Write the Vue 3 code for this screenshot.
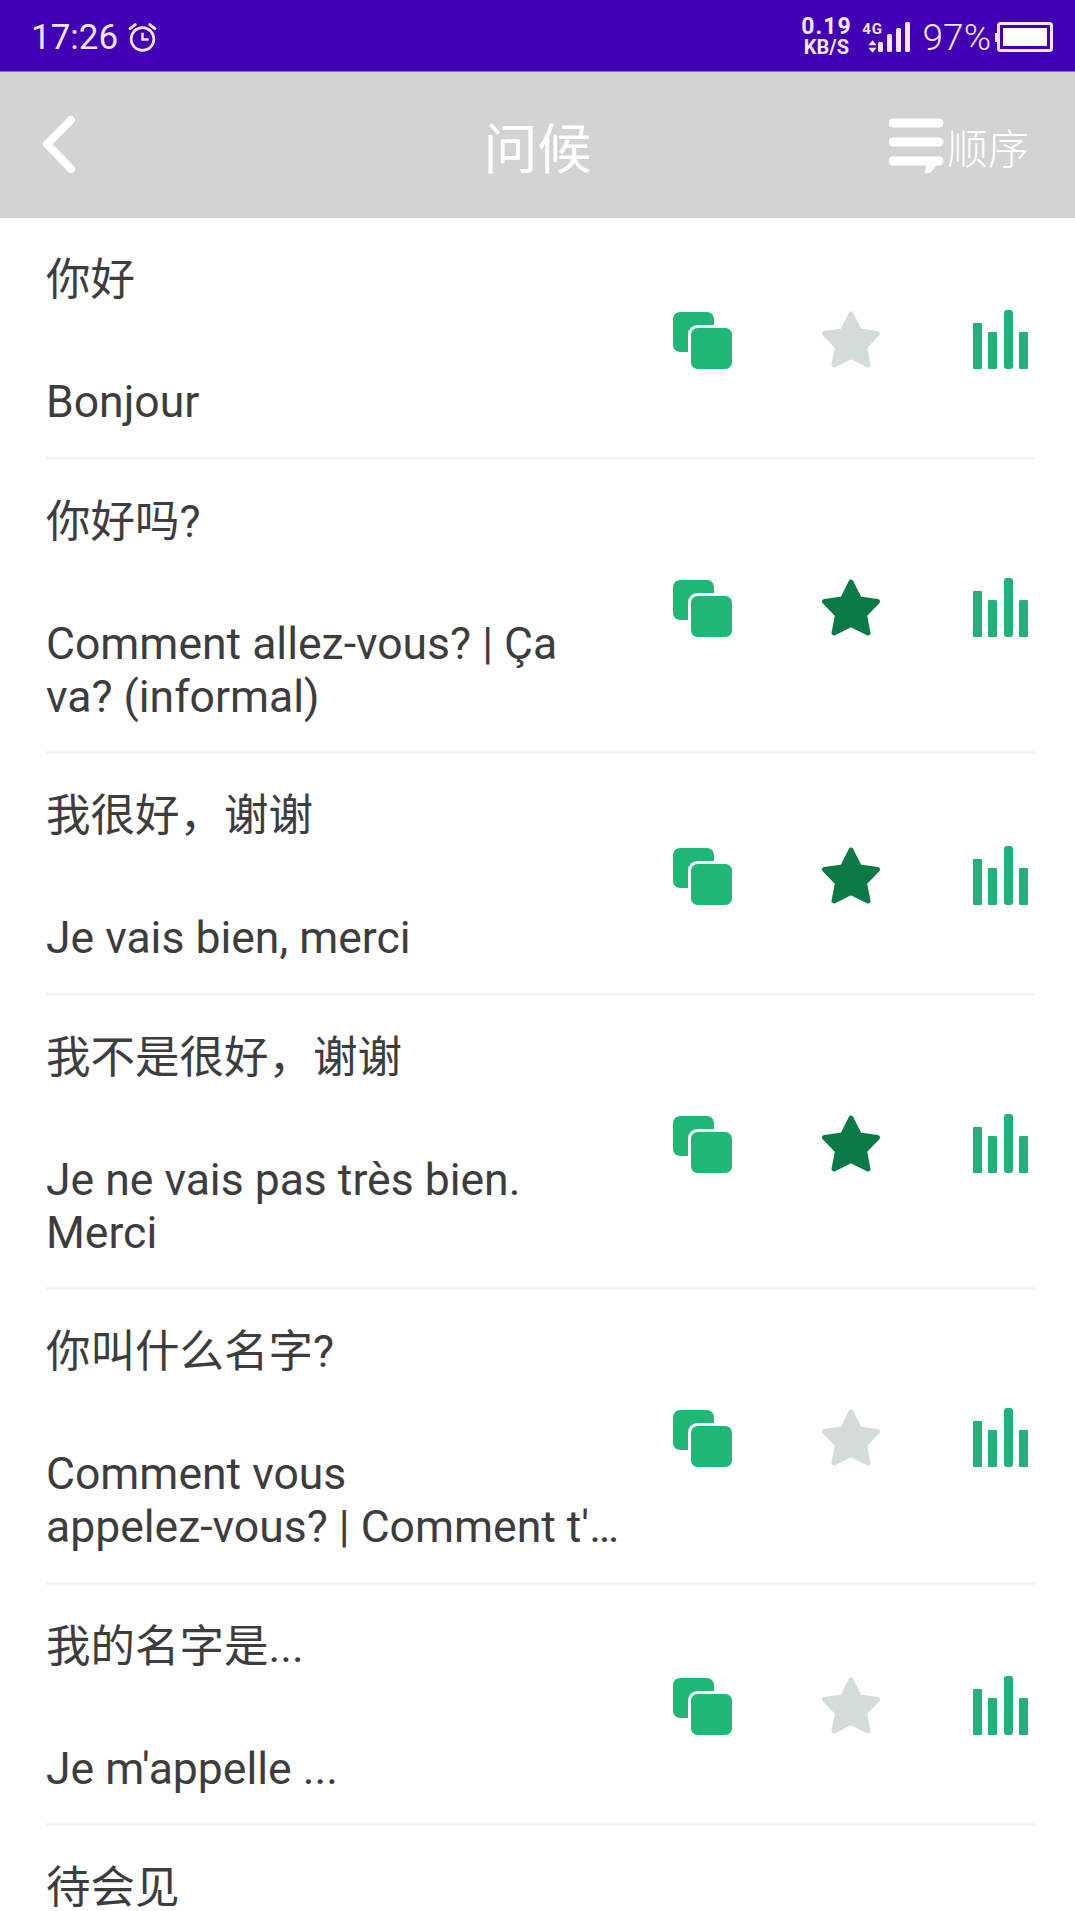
<template>
  <div class="phone">
    <div class="statusBar">
      <span class="clock">17:26</span>
      <svg class="alarm" viewBox="0 0 30 30" width="31" height="31">
        <circle cx="15" cy="16.500" r="11" fill="none" stroke="#f4e6ff" stroke-width="2.600" />
        <path d="M15 10.500v6.500h6" fill="none" stroke="#f4e6ff" stroke-width="2.400" />
        <path d="M3 6.500l5-4M27 6.500l-5-4" fill="none" stroke="#f4e6ff" stroke-width="2.800" stroke-linecap="round" />
      </svg>
      <div class="spacer"></div>
      <div class="speed">
        <span class="speedValue">0.19</span>
        <span class="speedUnit">KB/S</span>
      </div>
      <div class="network">
        <span class="networkLabel">4G</span>
        <svg viewBox="0 0 10 14" width="9" height="13">
          <path d="M5 0l4.500 5.500H.500zM5 14l4.500-5.500H.500z" fill="#f4e6ff" />
        </svg>
      </div>
      <svg class="signal" viewBox="0 0 32 30" width="32" height="30">
        <rect x="0" y="20" width="5" height="10" rx="1.500" fill="#f4e6ff" />
        <rect x="9" y="12" width="5" height="18" rx="1.500" fill="#f4e6ff" />
        <rect x="18" y="6" width="5" height="24" rx="1.500" fill="#f4e6ff" />
        <rect x="27" y="0" width="5" height="30" rx="1.500" fill="#f4e6ff" />
      </svg>
      <span class="battery">97%</span>
      <svg class="batteryIcon" viewBox="0 0 58 30" width="58" height="30">
        <rect x="0" y="11" width="3" height="9" fill="#f4e6ff" />
        <rect x="3.500" y="1.500" width="53" height="27" rx="2" fill="#4200b5" stroke="#f4e6ff" stroke-width="3" />
        <rect x="8" y="6" width="44" height="18" fill="#fff" />
      </svg>
    </div>

    <div class="navBar">
      <svg class="back" viewBox="0 0 34 60" width="34" height="60">
        <path d="M29 5L5 29l24 25" fill="none" stroke="#fff" stroke-width="8" stroke-linecap="round" stroke-linejoin="round" />
      </svg>
      <span class="title">问候</span>
      <div class="order">
        <svg viewBox="0 0 58 58" width="58" height="58">
          <path d="M4 6h46M4 25h46M4 44h46" fill="none" stroke="#fff" stroke-width="9" stroke-linecap="round" />
          <path d="M38 41h16L41 56h-5z" fill="#fff" />
        </svg>
        <span>顺序</span>
      </div>
    </div>

    <div class="list">
      <div v-for="phrase in phrases" :key="phrase.cn" class="row">
        <div class="texts">
          <p class="cn">{{ phrase.cn }}</p>
          <p class="fr">{{ phrase.fr }}</p>
        </div>
        <div class="actions">
          <svg viewBox="0 0 60 60" width="60" height="60">
            <rect x="0" y="2" width="41" height="40" rx="7" fill="#1fb877" />
            <rect x="16.500" y="16.500" width="44" height="44" rx="8" fill="#1fb877" stroke="#fefefe" stroke-width="3" />
          </svg>
          <svg viewBox="0 0 60 60" width="60" height="60">
            <polygon
              points="30,4 38.500,21 56.500,23.500 43.500,37 47,55 30,46.500 13,55 16.500,37 3.500,23.500 21.500,21"
              :fill="phrase.starred ? '#0b7a46' : '#d3dcd9'"
              :stroke="phrase.starred ? '#0b7a46' : '#d3dcd9'"
              stroke-width="5"
              stroke-linejoin="round"
            />
          </svg>
          <svg viewBox="0 0 60 60" width="60" height="60">
            <rect x="4" y="13" width="9" height="46" rx="1" fill="#20b27a" />
            <rect x="19" y="22" width="9" height="37" rx="1" fill="#20b27a" />
            <rect x="35" y="0" width="9" height="59" rx="3" fill="#20b27a" />
            <rect x="50" y="22" width="9" height="37" rx="1" fill="#20b27a" />
          </svg>
        </div>
      </div>
    </div>
  </div>
</template>

<script setup>
const phrases = [
  { cn: '你好', fr: 'Bonjour', starred: false },
  { cn: '你好吗?', fr: 'Comment allez-vous? | Ça va? (informal)', starred: true },
  { cn: '我很好，谢谢', fr: 'Je vais bien, merci', starred: true },
  { cn: '我不是很好，谢谢', fr: 'Je ne vais pas très bien. Merci', starred: true },
  { cn: '你叫什么名字?', fr: "Comment vous\nappelez-vous? | Comment t'…", starred: false },
  { cn: '我的名字是...', fr: "Je m'appelle ...", starred: false },
  { cn: '待会见', fr: '', starred: false }
]
</script>

<style scoped>
.phone {
  width: 1075px;
  height: 1911px;
  overflow: hidden;
  background: #fefefe;
  font-family: Roboto, "Noto Sans CJK SC", sans-serif;
  color: #3d3d3d;
}

.statusBar {
  height: 68px;
  display: flex;
  align-items: center;
  padding: 3px 22px 0 31px;
  background: #4200b5;
  border-bottom: 1px solid #8f63d8;
  color: #f4e6ff;
}

.clock {
  font-size: 35px;
  width: 87px;
}

.alarm {
  margin-left: 9px;
}

.spacer {
  flex: 1;
}

.speed {
  display: flex;
  flex-direction: column;
  align-items: center;
  font-weight: 700;
  line-height: 21px;
}

.speedValue {
  font-size: 23px;
  letter-spacing: 1px;
}

.speedUnit {
  font-size: 20px;
}

.network {
  display: flex;
  flex-direction: column;
  align-items: center;
  gap: 4px;
  margin-left: 10px;
  width: 22px;
}

.networkLabel {
  font-size: 15px;
  font-weight: 700;
  line-height: 14px;
  letter-spacing: 1px;
}

.network svg {
  display: block;
}

.signal {
  margin-left: -6px;
}

.battery {
  margin-left: 13px;
  font-size: 37px;
  font-weight: 300;
}

.batteryIcon {
  margin-left: 4px;
}

.navBar {
  height: 146px;
  display: flex;
  align-items: center;
  justify-content: center;
  position: relative;
  background: #d3d3d3;
  color: #fff;
}

.back {
  position: absolute;
  left: 42px;
  top: 43px;
}

.title {
  font-size: 54px;
}

.order {
  position: absolute;
  right: 46px;
  top: 44px;
  display: flex;
  align-items: center;
  font-size: 41px;
  font-weight: 300;
}

.list {
  display: flex;
  flex-direction: column;
}

.row {
  display: flex;
  align-items: center;
  margin: 0 40px 0 46px;
  padding: 36px 0 27.5px;
  border-bottom: 3px solid #f4f4f4;
}

.texts {
  width: 574px;
  line-height: 53px;
}

.cn {
  margin: 0 0 69px;
  font-size: 44.5px;
}

.fr {
  margin: 0;
  min-height: 53px;
  font-size: 44.5px;
  white-space: pre-line;
}

.actions {
  margin: 0 0 4px 53px;
  display: flex;
  gap: 88px;
}
</style>
